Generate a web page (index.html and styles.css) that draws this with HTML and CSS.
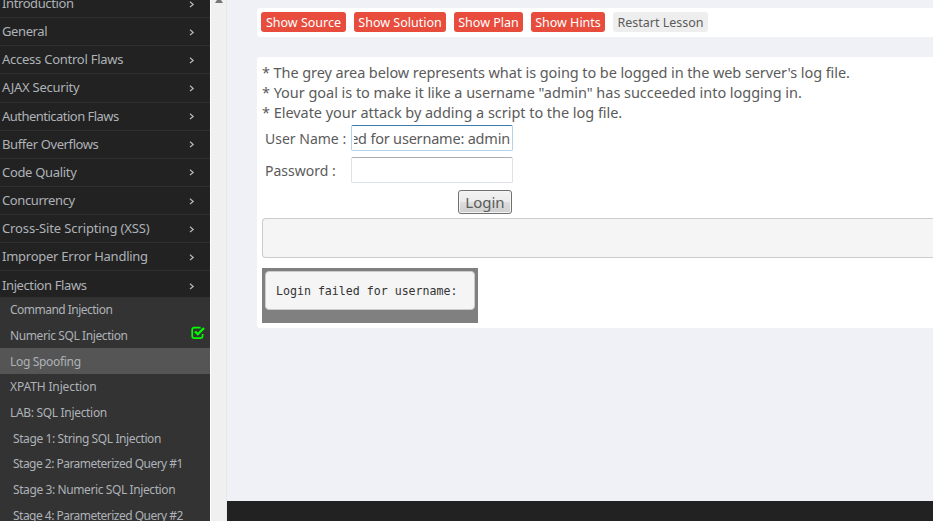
FILE: index.html
```html
<!DOCTYPE html>
<html lang="en">
<head>
<meta charset="utf-8">
<title>Log Spoofing</title>
<link rel="stylesheet" href="styles.css">
</head>
<body>
<svg class="defs" width="0" height="0"><symbol id="chevron" viewBox="0 0 6 7"><path d="M1 .7 4.2 3.4 1 6.1" fill="none" stroke="currentColor" stroke-width="1.3"/></symbol></svg>
<div class="app">
  <nav class="sidebar">
    <ul class="menu">
      <li class="t4"><span>Introduction</span><svg><use href="#chevron"/></svg></li>
      <li class="t4"><span>General</span><svg><use href="#chevron"/></svg></li>
      <li class="t2"><span>Access Control Flaws</span><svg><use href="#chevron"/></svg></li>
      <li class="t2"><span>AJAX Security</span><svg><use href="#chevron"/></svg></li>
      <li class="t5"><span>Authentication Flaws</span><svg><use href="#chevron"/></svg></li>
      <li class="t4"><span>Buffer Overflows</span><svg><use href="#chevron"/></svg></li>
      <li class="t3"><span>Code Quality</span><svg><use href="#chevron"/></svg></li>
      <li class="t4"><span>Concurrency</span><svg><use href="#chevron"/></svg></li>
      <li class="t1"><span>Cross-Site Scripting (XSS)</span><svg><use href="#chevron"/></svg></li>
      <li class="t2"><span>Improper Error Handling</span><svg><use href="#chevron"/></svg></li>
      <li class="open t4"><span>Injection Flaws</span><svg><use href="#chevron"/></svg></li>
    </ul>
    <ul class="lessons">
      <li class="t5"><span>Command Injection</span></li>
      <li class="t4"><span>Numeric SQL Injection</span><svg class="done" viewBox="0 0 14 14"><path d="M9.6 1.6H3.4Q1.2 1.6 1.2 3.8V10Q1.2 12.2 3.4 12.2H9.4Q11.6 12.2 11.6 10V8" fill="none" stroke="#0f0" stroke-width="1.7"/><path d="M4 5.5 6.8 8.2 13 2" fill="none" stroke="#0f0" stroke-width="2.3"/></svg></li>
      <li class="active t3"><span>Log Spoofing</span></li>
      <li class="t1"><span>XPATH Injection</span></li>
      <li class="t3"><span>LAB: SQL Injection</span></li>
      <li class="stage t4"><span>Stage 1: String SQL Injection</span></li>
      <li class="stage t5"><span>Stage 2: Parameterized Query #1</span></li>
      <li class="stage t4"><span>Stage 3: Numeric SQL Injection</span></li>
      <li class="stage t5"><span>Stage 4: Parameterized Query #2</span></li>
    </ul>
  </nav>
  <div class="scrollbar"><svg width="8" height="3" viewBox="0 0 8 3"><path d="M2 0H6L8 3H0Z" fill="#777"/></svg></div>
  <div class="page">
    <main>
      <div class="toolbar">
        <button class="w85">Show Source</button><button class="w92">Show Solution</button><button class="w69">Show Plan</button><button class="w74">Show Hints</button><button class="plain">Restart Lesson</button>
      </div>
      <section class="lesson">
        <p class="l1">* The grey area below represents what is going to be logged in the web server's log file.</p>
        <p class="l2">* Your goal is to make it like a username "admin" has succeeded into logging in.</p>
        <p class="l2">* Elevate your attack by adding a script to the log file.</p>
        <form>
          <label>User Name :</label><div class="field focus"><div class="value">ed for username: admin</div></div>
          <label>Password :</label><div class="field"></div>
          <button type="button" class="login">Login</button>
        </form>
        <pre class="empty"></pre>
        <div class="log"><pre>Login failed for username:</pre></div>
      </section>
    </main>
    <footer></footer>
  </div>
</div>
</body>
</html>
```
FILE: styles.css
```css
* { box-sizing: border-box; }
body { margin: 0; overflow: hidden; font-family: "Noto Sans", "Open Sans", sans-serif; color: #5b5b5b; }
.defs { position: absolute; }
.app { display: flex; width: 933px; height: 521px; overflow: hidden; }
ul { list-style: none; margin: 0; padding: 0; }
.sidebar { flex: none; width: 210px; height: 521px; background: #333; overflow: hidden; color: #aeb2b7; white-space: nowrap; }
.menu { margin-top: -10px; background: #222; font-size: 13px; }
.menu li { display: flex; align-items: center; justify-content: space-between; height: 28.15px; padding: 0 15px 0 2px; border-bottom: 1px solid #2f2f2f; }
.menu li.open { height: 25.5px; padding-top: 3px; border: 0; }
.menu span { margin-top: -1px; }
.menu svg { width: 6px; height: 7px; margin-top: 1px; }
.t1 { letter-spacing: -.13px; }
.t2 { letter-spacing: -.25px; }
.t3 { letter-spacing: -.32px; }
.t4 { letter-spacing: -.4px; }
.t5 { letter-spacing: -.52px; }
.lessons { font-size: 12px; }
.lessons li { display: flex; align-items: center; justify-content: space-between; height: 25.7px; padding: 0 5px 0 10px; }
.lessons li.active { background: #555; }
.lessons li.stage { padding-left: 13px; }
.done { width: 14px; height: 14px; margin-top: -5px; }
.scrollbar { flex: none; width: 17px; padding-left: 4px; background: #f0f0f0; border-left: 1px solid #fff; border-right: 1px solid #e8e8eb; }
.scrollbar svg { display: block; }
.page { flex: 1; display: flex; flex-direction: column; background: #f0f1f7; min-width: 0; }
main { flex: none; height: 501px; padding: 8px 0 0 30px; }
footer { flex: 1; background: #222; }
.toolbar { display: flex; gap: 8px; height: 29px; padding: 4px; background: #fff; border-radius: 3px 0 0 3px; }
button { font-family: inherit; padding: 0; white-space: nowrap; }
.toolbar button { height: 20px; padding-top: 1px; border: 0; border-radius: 3px; background: #e74c3c; color: #fff; font-size: 12.5px; line-height: 20px; }
.toolbar .w85 { width: 85px; }
.toolbar .w92 { width: 92px; }
.toolbar .w69 { width: 69px; }
.toolbar .w74 { width: 74px; }
.toolbar .plain { width: 95px; background: #eee; color: #5b5b5b; }
.lesson { height: 271px; margin-top: 20px; padding: 5px 0 0 5px; background: #fff; border-radius: 3px 0 0 3px; font-size: 14px; }
p { margin: 0; height: 20px; font-size: 14.5px; line-height: 20px; white-space: nowrap; }
.l1 { letter-spacing: -.09px; }
.l2 { letter-spacing: -.04px; }
form { display: grid; grid-template-columns: 86px 162px; column-gap: 3px; row-gap: 6px; grid-template-rows: 26px 26px 25px; margin-top: 3px; }
label { padding-left: 3px; line-height: 27px; white-space: nowrap; }
.field { height: 26px; border: 1px solid #dde1e8; border-top-color: #abadb3; border-radius: 2px; }
.focus { padding: 0 2px; border-color: #b3d3ea; border-top-color: #3d7bad; }
.value { display: flex; justify-content: flex-end; overflow: hidden; font-size: 14.5px; letter-spacing: -.2px; line-height: 25px; white-space: nowrap; }
.login { grid-column: 2; justify-self: end; width: 54px; height: 24px; margin: 1px 1px 0 0; border: 1px solid #707070; border-radius: 3px; background: linear-gradient(#f2f2f2, #ebebeb 50%, #ddd 50%, #cfcfcf) padding-box; box-shadow: inset 0 0 0 1px #f4f4f4; color: #5b5b5b; font-size: 15px; line-height: 21px; }
pre { margin: 0; background: #f5f5f5; border: 1px solid #ccc; border-radius: 4px; }
.empty { height: 40px; margin-top: 4px; border-right: 0; border-radius: 4px 0 0 4px; }
.log { width: 216px; height: 55px; margin-top: 10px; padding: 3px; background: #808080; }
.log pre { height: 39px; padding-left: 10px; color: #333; font: 11.6px/38px "DejaVu Sans Mono", monospace; }
```
